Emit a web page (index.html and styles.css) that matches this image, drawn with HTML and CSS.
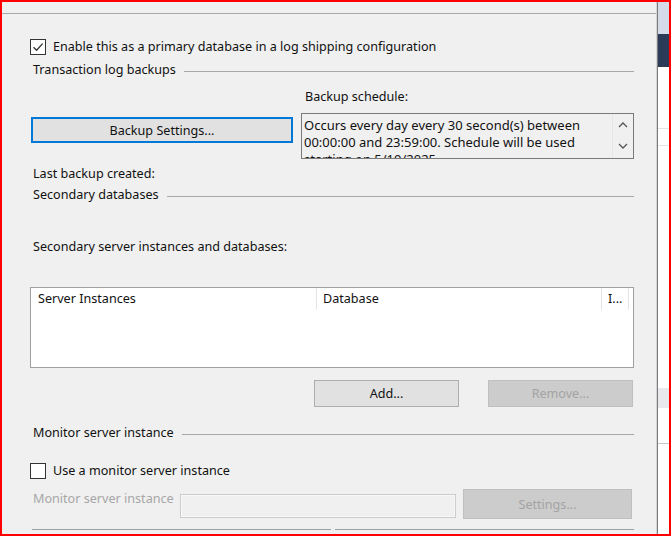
FILE: index.html
```html
<!DOCTYPE html>
<html>
<head>
<meta charset="utf-8">
<link rel="stylesheet" href="styles.css">
</head>
<body>
<div class="frame">
  <div class="pane">
    <div class="pane-top"></div>
    <div class="content">
      <label class="check-row first">
        <span class="checkbox checked">
          <svg width="14" height="14" viewBox="0 0 14 14"><path d="M2.5 7.2 L5.6 10.2 L11.6 3.6" fill="none" stroke="#333" stroke-width="1.3"/></svg>
        </span>
        <span class="check-text">Enable this as a primary database in a log shipping configuration</span>
      </label>

      <div class="group-title t-trans"><span>Transaction log backups</span></div>

      <div class="backup-row">
        <div class="backup-left">
          <button class="btn focused backup-btn">Backup Settings...</button>
        </div>
        <div class="backup-right">
          <div class="label">Backup schedule:</div>
          <div class="schedule-box">
            <div class="schedule-text">Occurs every day every 30 second(s) between 00:00:00 and 23:59:00. Schedule will be used starting on 5/19/2025.</div>
            <div class="schedule-scroll">
              <svg width="10" height="6" viewBox="0 0 10 6"><path d="M1 5 L5 1 L9 5" fill="none" stroke="#555" stroke-width="1.3"/></svg>
              <svg width="10" height="6" viewBox="0 0 10 6"><path d="M1 1 L5 5 L9 1" fill="none" stroke="#555" stroke-width="1.3"/></svg>
            </div>
          </div>
        </div>
      </div>

      <div class="label last-backup">Last backup created:</div>

      <div class="group-title t-sec"><span>Secondary databases</span></div>

      <div class="label sec-label">Secondary server instances and databases:</div>

      <div class="listbox">
        <div class="list-head">
          <div class="col col-server">Server Instances</div>
          <div class="col col-db">Database</div>
          <div class="col col-i">I...</div>
        </div>
      </div>

      <div class="btn-row">
        <button class="btn add-btn">Add...</button>
        <button class="btn disabled remove-btn">Remove...</button>
      </div>

      <div class="group-title t-mon"><span>Monitor server instance</span></div>

      <label class="check-row second">
        <span class="checkbox"></span>
        <span class="check-text">Use a monitor server instance</span>
      </label>

      <div class="monitor-row">
        <div class="label disabled-text mon-label">Monitor server instance</div>
        <div class="textbox disabled-box"></div>
        <button class="btn disabled settings-btn">Settings...</button>
      </div>

      <div class="bottom-row">
        <div class="cut-box"></div>
        <div class="cut-box"></div>
      </div>
    </div>
  </div>
  <div class="strip">
    <div class="s-light"></div>
    <div class="s-navy"></div>
    <div class="s-white s1"></div>
    <div class="s-white s2"></div>
    <div class="s-white s3"></div>
    <div class="s-band"></div>
    <div class="s-white s4"></div>
    <div class="s-white s5"></div>
  </div>
</div>
</body>
</html>
```

FILE: styles.css
```css
html, body {
  margin: 0;
  padding: 0;
  background: #f0f0f0;
}

body {
  font-family: "Noto Sans", "Open Sans", sans-serif;
  font-size: 12.6px;
  color: #111;
}

.frame {
  width: 671px;
  height: 536px;
  box-sizing: border-box;
  border: 2px solid #ff0000;
  display: flex;
  overflow: hidden;
  background: #f0f0f0;
}

.pane {
  width: 655px;
  flex: none;
  box-sizing: border-box;
  border-right: 1px solid #d4d4d4;
  display: flex;
  flex-direction: column;
  overflow: hidden;
}

.pane-top {
  height: 11px;
  flex: none;
  margin-right: 1px;
}

.content {
  flex: 1;
  border-top: 1px solid #a8a8a8;
  padding: 0 22px 0 28px;
  overflow: hidden;
  line-height: 16px;
}

.label {
  padding-left: 3px;
  height: 16px;
  white-space: nowrap;
}

.check-row {
  display: flex;
  align-items: center;
  height: 16px;
}

.check-row.first { margin-top: 25px; }
.check-row.second { margin-top: 22px; }

.checkbox {
  width: 16px;
  height: 16px;
  box-sizing: border-box;
  border: 1px solid #333;
  background: #fff;
  display: flex;
  align-items: center;
  justify-content: center;
  flex: none;
}

.check-text {
  margin-left: 7px;
  white-space: nowrap;
}

.group-title {
  display: flex;
  align-items: center;
  height: 16px;
  padding-left: 3px;
  white-space: nowrap;
}

.group-title::after {
  content: "";
  flex: 1;
  border-top: 1px solid #a8a8a8;
  margin-left: 8px;
  margin-top: 2px;
}

.t-trans { margin-top: 7px; }
.t-sec { margin-top: 5px; }
.t-mon { margin-top: 18px; }

.backup-row {
  display: grid;
  grid-template-columns: 271px 1fr;
  margin-top: 11px;
}

.backup-left {
  padding-top: 28px;
}

.btn {
  font-family: inherit;
  font-size: 12.6px;
  color: #111;
  background: #e1e1e1;
  border: 1px solid #adadad;
  box-sizing: border-box;
  padding: 0;
  margin: 0;
}

.btn.focused {
  border: 2px solid #0078d7;
}

.backup-btn {
  width: 262px;
  height: 26px;
  margin-left: 1px;
  display: block;
}

.backup-right .label {
  padding-left: 4px;
}

.schedule-box {
  margin-top: 8px;
  height: 46px;
  box-sizing: border-box;
  border: 1px solid #7a7a7a;
  background: #f0f0f0;
  display: flex;
  overflow: hidden;
}

.schedule-text {
  flex: 1;
  padding: 3px 0 0 2px;
  font-size: 13px;
  line-height: 17px;
}

.schedule-scroll {
  width: 21px;
  flex: none;
  border-left: 1px solid #e6e6e6;
  display: flex;
  flex-direction: column;
  align-items: center;
  padding-top: 8px;
  gap: 15px;
  box-sizing: border-box;
}

.schedule-scroll svg { display: block; }

.last-backup { margin-top: 7px; }
.sec-label { margin-top: 36px; }

.listbox {
  margin-top: 32px;
  height: 81px;
  box-sizing: border-box;
  border: 1px solid #a0a0a0;
  background: #fff;
}

.list-head {
  display: flex;
  height: 22px;
}

.col {
  box-sizing: border-box;
  border-right: 1px solid #e5e5e5;
  padding-left: 7px;
  line-height: 22px;
  white-space: nowrap;
}

.col-server { width: 286px; }
.col-db { width: 285px; padding-left: 6px; }
.col-i { width: 27px; padding-left: 6px; }

.btn-row {
  display: flex;
  justify-content: flex-end;
  gap: 29px;
  margin-top: 12px;
  padding-right: 1px;
}

.add-btn, .remove-btn {
  width: 145px;
  height: 27px;
}

.btn.disabled {
  background: #cccccc;
  border-color: #bfbfbf;
  color: #a3a3a3;
}

.monitor-row {
  display: flex;
  align-items: flex-start;
  margin-top: 10px;
  height: 30px;
}

.disabled-text { color: #a6a6a6; }

.mon-label {
  margin-top: 2px;
  width: 147px;
}

.textbox {
  width: 276px;
  height: 24px;
  box-sizing: border-box;
  margin-top: 5px;
}

.disabled-box {
  border: 1px solid #cccccc;
  background: #f0f0f0;
  box-shadow: inset 0 0 0 1px #f8f8f8;
}

.settings-btn {
  width: 169px;
  height: 30px;
  margin-left: 7px;
}

.bottom-row {
  display: flex;
  gap: 4px;
  margin-top: 10px;
  padding-left: 2px;
}

.cut-box {
  flex: 1;
  height: 10px;
  border-top: 1px solid #a0a0a0;
}

.strip {
  width: 12px;
  flex: none;
  box-sizing: border-box;
  border-left: 1px solid #7c7c7c;
  display: flex;
  flex-direction: column;
}

.s-light { height: 32px; background: #d5dbe8; }
.s-navy { height: 33px; background: #2b3a56; }
.s-white { background: #fff; }
.s1 { height: 61px; border-bottom: 1px solid #e4e4e4; }
.s2 { height: 16px; border-bottom: 1px solid #e4e4e4; }
.s3 { height: 242px; }
.s-band { height: 20px; background: #e9e9ed; }
.s4 { height: 35px; border-bottom: 1px solid #c8c8c8; }
.s5 { flex: 1; }
```
